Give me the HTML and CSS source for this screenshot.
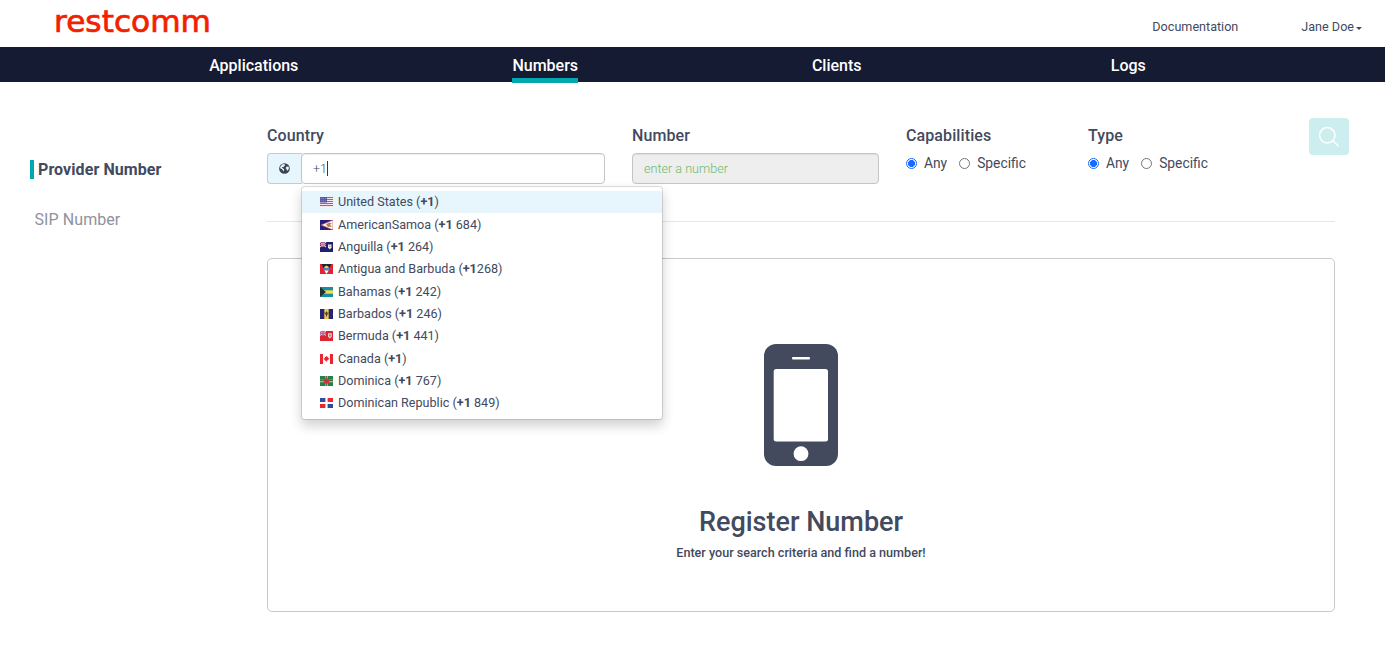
FILE: index.html
```html
<!DOCTYPE html>
<html lang="en">
<head>
<meta charset="utf-8">
<title>Restcomm - Numbers</title>
<link rel="stylesheet" href="styles.css">
</head>
<body>
<header class="topbar">
  <svg class="logo" width="160" height="40" viewBox="0 0 160 40" role="img" aria-label="restcomm"><text x="0" y="32" textLength="157" lengthAdjust="spacingAndGlyphs">restcomm</text></svg>
  <div class="toplinks">
    <a class="doc">Documentation</a>
    <a class="user">Jane Doe<span class="caret"></span></a>
  </div>
</header>
<nav class="nav">
  <a><span>Applications</span></a>
  <a class="current"><span>Numbers</span></a>
  <a><span>Clients</span></a>
  <a><span>Logs</span></a>
</nav>
<div class="page">
  <aside class="side">
    <a class="side-active">Provider Number</a>
    <a class="side-link">SIP Number</a>
  </aside>
  <main class="main">
    <form class="filters">
      <div class="field country">
        <label class="label">Country</label>
        <div class="group">
          <span class="addon"><svg width="11" height="11" viewBox="0 0 12 12"><circle cx="6" cy="6" r="5.8" fill="#3c4358"/><path d="M5.2 1.1 3.1 2 1.2 4.3 1.5 5.9 3 6.5 4.2 7.9 4.5 9.3 5.3 8.4 5.5 6.9 4.1 5.6 3.2 5.3 3.4 4.4 4.7 4.6 5.6 3.4 6.7 2.8 6.3 1.6ZM8 4.2 10.4 3.8 10.9 5.8 9.7 8.2 8.5 7.8 8.3 6.5 7.2 5.8Z" fill="#e6f6fc"/></svg></span>
          <div class="input typed">+1<span class="cursor"></span></div>
        </div>
        <ul class="menu">
          <li class="hover"><svg class="flag" viewBox="0 0 13 10"><path fill="#f7e8ee" d="M0 0h13v10H0z"/><path stroke="#e34857" d="M0 .5h13M0 2.5h13M0 4.5h13M0 6.5h13M0 8.5h13"/><path fill="#5a59a5" d="M0 0h7v5.5H0z"/><path stroke="#aaa9d5" stroke-width=".6" stroke-dasharray="1 1" d="M.8 1.5h5.5M.8 3.7h5.5"/></svg>United States (<b>+1</b>)</li>
          <li><svg class="flag" viewBox="0 0 13 10"><path fill="#24207b" d="M0 0h13v10H0z"/><path fill="#fff" stroke="#d64151" stroke-width=".7" d="M13 0 1 5l12 5z"/><path fill="#b88240" d="m6 4.5 3-2 3 1-2 1 2 2-4 .5z"/></svg>AmericanSamoa (<b>+1</b> 684)</li>
          <li><svg class="flag" viewBox="0 0 13 10"><path fill="#20206d" d="M0 0h13v10H0z"/><path stroke="#d7c7df" stroke-width="1.1" d="M0 0l6 5M6 0 0 5M3 0v5M0 2.5h6"/><path stroke="#d34b67" stroke-width=".7" d="M3 0v5M0 2.5h6"/><path fill="#e9eef5" d="M8 2.5h3.5v3L9.8 7.5 8 5.5z"/><path fill="#e8a55a" d="M9 3.5h1.6v1.4H9z"/></svg>Anguilla (<b>+1</b> 264)</li>
          <li><svg class="flag" viewBox="0 0 13 10"><path fill="#e42430" d="M0 0h13v10H0z"/><path fill="#25232b" d="M1.5 0h10L9.5 4h-6z"/><path fill="#f5d43b" d="m4 4 1-1.5 1.5-1L8 2.5 9 4z"/><path fill="#4687c7" d="M3.2 4h6.6L8.7 6.4H4.3z"/><path fill="#fff" d="M4.3 6.4h4.4L6.5 10z"/></svg>Antigua and Barbuda (<b>+1</b>268)</li>
          <li><svg class="flag" viewBox="0 0 13 10"><path fill="#168fa5" d="M0 0h13v10H0z"/><path fill="#f5dc50" d="M0 3.3h13v3.4H0z"/><path fill="#26302f" d="m0 0 6 5-6 5z"/></svg>Bahamas (<b>+1</b> 242)</li>
          <li><svg class="flag" viewBox="0 0 13 10"><path fill="#252475" d="M0 0h13v10H0z"/><path fill="#f1cb48" d="M4.3 0h4.4v10H4.3z"/><path fill="none" stroke="#25232b" stroke-width=".8" d="M6.5 2.5v5M5 3.2q0 2.5 1.5 2.7Q8 5.7 8 3.2"/></svg>Barbados (<b>+1</b> 246)</li>
          <li><svg class="flag" viewBox="0 0 13 10"><path fill="#dc2435" d="M0 0h13v10H0z"/><path fill="#82569b" d="M0 0h6v4.5H0z"/><path stroke="#f0cbd5" d="m0 0 6 4.5M6 0 0 4.5M3 0v4.5M0 2.2h6"/><path stroke="#d82a40" stroke-width=".7" d="M3 0v4.5M0 2.2h6"/><path fill="#e9d7d4" d="M8 2.3h3.7v3.5L9.8 7.6 8 5.8z"/><path fill="#ba7164" d="M9 3.6h1.7v2H9z"/></svg>Bermuda (<b>+1</b> 441)</li>
          <li><svg class="flag" viewBox="0 0 13 10"><path fill="#fff" d="M0 0h13v10H0z"/><path fill="#ec2331" d="M0 0h3v10H0zM10 0h3v10h-3zM6.5 1.7l.8 1.4.9-.4-.2 1.6 1.3-.3-.4 1.2-1.9 1.6H6.8V8h-.6V6.8H5.1L4.1 5.2l-.4-1.2L5 4.3l-.2-1.6.9.4z"/></svg>Canada (<b>+1</b>)</li>
          <li><svg class="flag" viewBox="0 0 13 10"><path fill="#238344" d="M0 0h13v10H0z"/><path stroke="#f3d255" stroke-width=".7" d="M0 4.1h13M5.6 0v10"/><path stroke="#25302b" stroke-width=".8" d="M0 4.9h13M6.4 0v10"/><path stroke="#fff" stroke-width=".7" d="M0 5.7h13M7.2 0v10"/><circle cx="6.5" cy="5" r="2.8" fill="#e3283a"/><circle cx="6.5" cy="5" r="1.1" fill="#527046"/></svg>Dominica (<b>+1</b> 767)</li>
          <li><svg class="flag" viewBox="0 0 13 10"><path fill="#fff" d="M0 0h13v10H0z"/><path fill="#2d4da0" d="M0 0h5.4v4H0zM7.6 6H13v4H7.6z"/><path fill="#ed2632" d="M7.6 0H13v4H7.6zM0 6h5.4v4H0z"/></svg>Dominican Republic (<b>+1</b> 849)</li>
        </ul>
      </div>
      <div class="field number">
        <label class="label">Number</label>
        <input class="input disabled" placeholder="enter a number" disabled>
      </div>
      <div class="field caps">
        <span class="label">Capabilities</span>
        <div class="radios"><i class="radio on"></i><span>Any</span><i class="radio"></i><span>Specific</span></div>
      </div>
      <div class="field type">
        <span class="label">Type</span>
        <div class="radios"><i class="radio on"></i><span>Any</span><i class="radio"></i><span>Specific</span></div>
      </div>
      <button class="search" type="button" aria-label="Search"><svg width="22" height="22" viewBox="0 0 22 22" fill="none" stroke="#fff" stroke-width="1.5"><circle cx="9.3" cy="9.3" r="7.7"/><path d="m14.8 14.8 5.7 5.5"/></svg></button>
    </form>
    <section class="panel">
      <svg class="phone" width="74" height="122" viewBox="0 0 74 122"><rect width="74" height="122" rx="12" fill="#434a5e"/><rect x="28" y="13" width="18" height="2.4" rx="1" fill="#fff"/><rect x="9.7" y="25" width="54.3" height="72.6" rx="2.5" fill="#fff"/><circle cx="37" cy="109.7" r="7.4" fill="#fff"/></svg>
      <h1 class="title">Register Number</h1>
      <p class="hint">Enter your search criteria and find a number!</p>
    </section>
  </main>
</div>
</body>
</html>
```
FILE: styles.css
```css
* { box-sizing: border-box; }
body { margin: 0; background: #fff; color: #434a5e; font: 400 12.6px/20px Roboto, sans-serif; height: 649px; overflow: hidden; }
.topbar { height: 47px; display: flex; justify-content: space-between; padding: 0 23px 0 54px; }
.logo text { font-family: "DejaVu Sans", sans-serif; font-size: 31px; fill: #f32000; stroke: #f32000; stroke-width: .7px; }
.toplinks { display: flex; gap: 63px; padding-top: 17px; }
.user { display: flex; align-items: center; height: 20px; }
.caret { border: 3.5px solid transparent; border-top-color: #434a5e; border-bottom: 0; margin: 2px 0 0 2px; }
.nav { height: 35px; background: #141b33; padding: 0 111px 0 108px; display: grid; grid-template-columns: repeat(4, 1fr); color: #fff; font-size: 16px; font-weight: 500; text-align: center; }
.nav span { display: inline-block; height: 36px; line-height: 37px; }
.nav .current span { border-bottom: 5px solid #00a9b0; }
.page { display: flex; }
.side { width: 267px; padding: 78px 0 0 30px; display: flex; flex-direction: column; align-items: flex-start; gap: 31px; font-size: 16px; line-height: 19px; }
.side-active { border-left: 4px solid #00a9b0; padding-left: 4px; font-weight: 700; letter-spacing: .08px; }
.side-link { padding-left: 4.5px; color: #8e929e; letter-spacing: .08px; }
.main { width: 1082px; padding-top: 36px; }
.filters { display: flex; height: 104px; width: 1082px; background: linear-gradient(#e7e7e9, #e7e7e9) 0 103px / 1068px 1px no-repeat; }
.field { padding-top: 8px; }
.label { display: block; font-size: 16px; line-height: 19px; font-weight: 500; margin-bottom: 8px; letter-spacing: .1px; }
.country { width: 338px; margin-right: 27px; position: relative; }
.group { display: flex; }
.addon { width: 35px; height: 31px; border: 1px solid #c9cacb; border-right: 0; border-radius: 4px 0 0 4px; background: #e6f6fc; display: flex; align-items: center; justify-content: center; padding: 0 1px 1px 0; }
.input { height: 31px; border: 1px solid #c4c5c7; border-radius: 4px; box-shadow: inset 0 1px 1px rgba(0,0,0,.07); font: 300 12.6px/29px Roboto, sans-serif; padding: 0 11px; color: #434a5e; }
.typed { width: 304px; margin-left: -1px; display: flex; align-items: center; }
.cursor { width: 1px; height: 15px; background: #30374d; }
.number { width: 247px; margin-right: 27px; }
.disabled { width: 247px; background: #eee; display: block; }
.disabled::placeholder { color: #6dbb6d; opacity: 1; }
.caps { width: 182px; }
.type { width: 221px; }
.radios { display: flex; align-items: center; height: 20px; font-size: 13.8px; }
.label + .radios { margin-top: 0; }
.radios span { margin: 0 12px 0 7px; line-height: 20px; }
.radio { width: 11px; height: 11px; border: 1px solid #757575; border-radius: 50%; flex: none; }
.radio.on { border-color: #1769ff; background: radial-gradient(circle, #1769ff 3.2px, #fff 3.8px); }
.caps .label, .type .label { margin-bottom: 8px; }
.search { width: 40px; height: 37px; border: 0; border-radius: 4px; background: #cceeef; padding: 0; display: flex; align-items: center; justify-content: center; }
.menu { position: absolute; left: 34px; top: 68px; width: 362px; height: 234px; margin: 0; padding: 4px 0; list-style: none; background: #fff; border: 1px solid rgba(0,0,0,.13); background-clip: padding-box; border-radius: 4px; box-shadow: 0 6px 12px rgba(0,0,0,.175); z-index: 2; }
.menu li { height: 22.37px; display: flex; align-items: center; padding-left: 18px; white-space: pre; }
.menu .hover { background: #e6f6fc; }
.flag { width: 13px; height: 10px; margin-right: 5px; flex: none; }
.panel { width: 1068px; height: 354px; margin-top: 36px; border: 1px solid #c8c9cb; border-radius: 5px; display: flex; flex-direction: column; align-items: center; padding-top: 85px; }
.title { margin: 39px 0 0; font-size: 27px; line-height: 34px; font-weight: 500; }
.hint { margin: 4px 0 0; font-size: 12.6px; font-weight: 500; }
```
